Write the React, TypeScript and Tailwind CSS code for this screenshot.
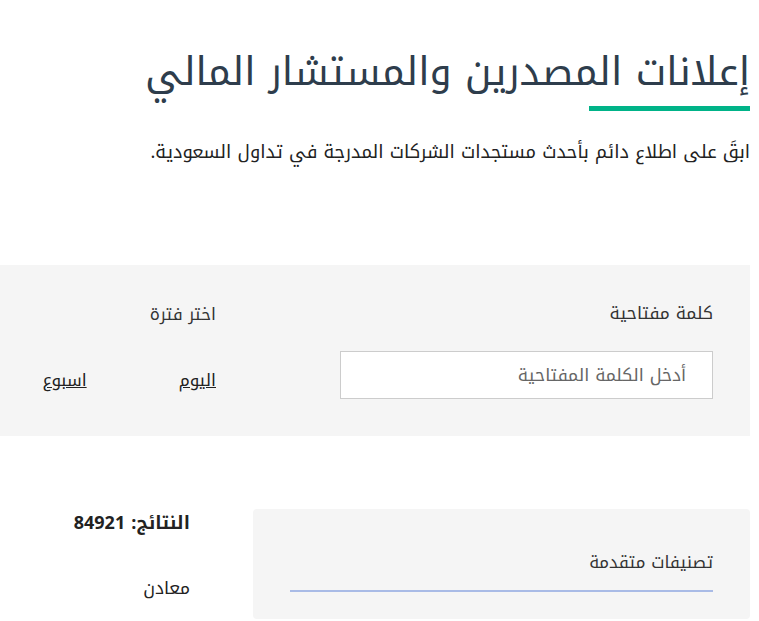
export default function App() {
  return (
    <div
      dir="rtl"
      className="min-h-screen bg-white pr-[9px] text-[#222]"
      style={{ fontFamily: '"Noto Kufi Arabic", "Noto Sans Arabic", "Noto Sans", "DejaVu Sans", sans-serif' }}
    >
      <div className="pt-[44px]">
        <h1 className="text-[39.3px] leading-[56px] font-normal text-[#2e3d4c]">
          إعلانات المصدرين والمستشار المالي
        </h1>
        <div className="mt-[6px] h-[5px] w-[161px] bg-[#00b388]" />
        <p className="mt-[27px] text-[18.3px] leading-[28px] text-[#222]">
          ابقَ على اطلاع دائم بأحدث مستجدات الشركات المدرجة في تداول السعودية.
        </p>
      </div>

      <div className="mt-[99px] flex h-[171px] items-start bg-[#f5f5f5] pr-[37px] pt-[36px]">
        <div className="w-[373px]">
          <label className="block text-[17.5px] leading-[26px] text-[#333]">كلمة مفتاحية</label>
          <input
            className="mt-[24px] h-[48px] w-[373px] border border-[#ccc] bg-white pr-[26px] text-[17.5px] outline-none placeholder:text-[#666]"
            placeholder="أدخل الكلمة المفتاحية"
          />
        </div>
        <div className="mr-[124px]">
          <div className="text-[17px] leading-[26px] text-[#333]">اختر فترة</div>
          <div className="mt-[40px] flex gap-[92px] text-[17px] leading-[26px]">
            <a className="text-[#222] underline">اليوم</a>
            <a className="text-[#222] underline">اسبوع</a>
          </div>
        </div>
      </div>

      <div className="mt-[73px] flex items-start">
        <div className="h-[110px] w-[497px] rounded-[4px] bg-[#f5f5f5] pl-[37px] pr-[37px] pt-[40px]">
          <div className="text-[17px] leading-[26px] text-[#333]">تصنيفات متقدمة</div>
          <div className="mt-[15px] h-[2px] bg-[#a9bbe6]" />
        </div>
        <div className="mr-[63px]">
          <div className="text-[18px] font-bold leading-[28px]">النتائج: 84921</div>
          <div className="mt-[38px] text-[17.5px] leading-[28px]">معادن</div>
        </div>
      </div>
    </div>
  );
}
